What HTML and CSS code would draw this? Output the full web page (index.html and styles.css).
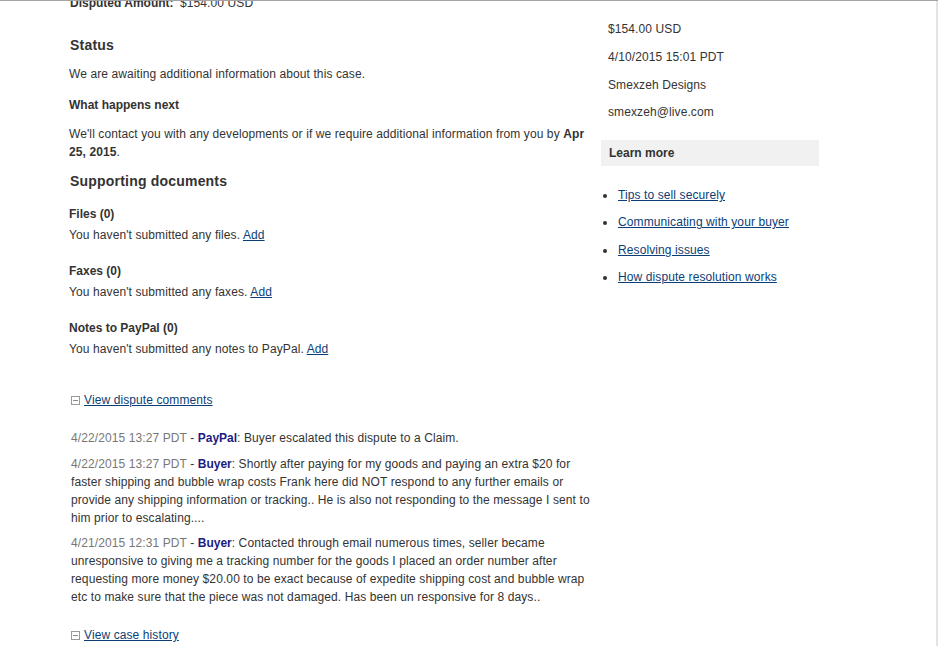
FILE: index.html
```html
<!DOCTYPE html>
<html>
<head>
<meta charset="utf-8">
<link rel="stylesheet" href="styles.css">
</head>
<body>
<div class="frame">
  <div class="page">
    <div class="main">
      <div class="amount-row"><span class="label">Disputed Amount:</span><span class="value">$154.00 USD</span></div>

      <h2 class="heading status-heading">Status</h2>
      <p class="text status-text">We are awaiting additional information about this case.</p>
      <h3 class="subheading next-heading">What happens next</h3>
      <p class="text next-text">We'll contact you with any developments or if we require additional information from you by <b>Apr 25, 2015</b>.</p>

      <h2 class="heading docs-heading">Supporting documents</h2>
      <div class="doc">
        <h3 class="subheading doc-title">Files (0)</h3>
        <p class="text">You haven't submitted any files. <a href="#" class="link">Add</a></p>
      </div>
      <div class="doc">
        <h3 class="subheading doc-title">Faxes (0)</h3>
        <p class="text">You haven't submitted any faxes. <a href="#" class="link">Add</a></p>
      </div>
      <div class="doc">
        <h3 class="subheading doc-title">Notes to PayPal (0)</h3>
        <p class="text">You haven't submitted any notes to PayPal. <a href="#" class="link">Add</a></p>
      </div>

      <div class="toggle comments-toggle"><span class="minus"></span><a href="#" class="link">View dispute comments</a></div>

      <div class="comments">
        <p class="text comment c1"><span class="time">4/22/2015 13:27 PDT</span> - <b class="who">PayPal</b>: Buyer escalated this dispute to a Claim.</p>
        <p class="text comment c2"><span class="time">4/22/2015 13:27 PDT</span> - <b class="who">Buyer</b>: Shortly after paying for my goods and paying an extra $20 for faster shipping and bubble wrap costs Frank here did NOT respond to any further emails or provide any shipping information or tracking.. He is also not responding to the message I sent to him prior to escalating....</p>
        <p class="text comment c3"><span class="time">4/21/2015 12:31 PDT</span> - <b class="who">Buyer</b>: Contacted through email numerous times, seller became unresponsive to giving me a tracking number for the goods I placed an order number after requesting more money $20.00 to be exact because of expedite shipping cost and bubble wrap etc to make sure that the piece was not damaged. Has been un responsive for 8 days..</p>
      </div>

      <div class="toggle history-toggle"><span class="minus"></span><a href="#" class="link">View case history</a></div>
    </div>

    <div class="side">
      <div class="facts">
        <p class="text fact">$154.00 USD</p>
        <p class="text fact">4/10/2015 15:01 PDT</p>
        <p class="text fact">Smexzeh Designs</p>
        <p class="text fact fact-last">smexzeh@live.com</p>
      </div>
      <div class="learn-box">Learn more</div>
      <ul class="learn-list">
        <li><a href="#" class="link">Tips to sell securely</a></li>
        <li><a href="#" class="link">Communicating with your buyer</a></li>
        <li><a href="#" class="link">Resolving issues</a></li>
        <li><a href="#" class="link">How dispute resolution works</a></li>
      </ul>
    </div>
  </div>
</div>
</body>
</html>
```

FILE: styles.css
```css
* { box-sizing: border-box; }
html, body { margin: 0; padding: 0; background: #fff; }
body {
  font-family: "Liberation Sans", Arial, sans-serif;
  font-size: 12px;
  line-height: 18px;
  color: #333;
  letter-spacing: 0.1px;
}
.frame {
  width: 938px;
  height: 646px;
  overflow: hidden;
  border-top: 1px solid #a3a3a3;
  position: relative;
}
.frame::after {
  content: "";
  position: absolute;
  top: 0;
  right: 0;
  width: 2px;
  height: 100%;
  background: #e3e3e3;
}
.page {
  display: flex;
  padding-left: 69px;
}
.main {
  width: 528px;
  margin-top: -7px;
  display: flex;
  flex-direction: column;
}
.text { margin: 0; }
.link { color: #0b3e77; text-decoration: underline; }
.amount-row { padding-left: 1px; }
.amount-row .label { font-weight: bold; display: inline-block; width: 110px; letter-spacing: 0; }
.heading {
  margin: 0;
  font-size: 14px;
  font-weight: bold;
  line-height: 18px;
  padding-left: 1px;
  letter-spacing: 0.2px;
}
.subheading {
  margin: 0;
  font-size: 12px;
  font-weight: bold;
  line-height: 18px;
  letter-spacing: 0;
}
.status-heading { margin-top: 24px; }
.status-text { margin-top: 11px; }
.next-heading { margin-top: 13px; }
.next-text { margin-top: 11px; }
.docs-heading { margin-top: 11px; }
.doc { margin-top: 15px; }
.doc + .doc { margin-top: 18px; }
.doc-title { margin-bottom: 3px; }
.toggle { display: flex; align-items: center; padding-left: 2px; }
.comments-toggle { margin-top: 33px; }
.minus {
  width: 9px;
  height: 9px;
  border: 1px solid #9a9a9a;
  position: relative;
  margin-right: 4px;
  margin-top: 1px;
}
.minus::after {
  content: "";
  position: absolute;
  left: 1px;
  right: 1px;
  top: 3px;
  height: 1px;
  background: #8a8a8a;
}
.comments { margin-top: 20px; display: flex; flex-direction: column; padding-left: 2px; }
.c2 { margin-top: 8px; }
.c3 { margin-top: 7px; }
.time { color: #777; }
.who { color: #1c1c84; letter-spacing: 0; }
.history-toggle { margin-top: 20px; }

.side {
  margin-left: 4px;
  width: 218px;
  padding-top: 19px;
}
.facts { display: flex; flex-direction: column; gap: 10px; padding-left: 7px; }
.fact-last { margin-top: -1px; }
.learn-box {
  margin-top: 19px;
  background: #f1f1f1;
  height: 26px;
  line-height: 26px;
  padding-left: 8px;
  font-weight: bold;
  letter-spacing: 0;
}
.learn-list {
  list-style: none;
  margin: 20px 0 0 0;
  padding: 0;
  display: flex;
  flex-direction: column;
  gap: 9.4px;
}
.learn-list li {
  position: relative;
  padding-left: 17px;
}
.learn-list li::before {
  content: "";
  position: absolute;
  left: 2px;
  top: 8px;
  width: 4px;
  height: 4px;
  border-radius: 50%;
  background: #333;
}
```
